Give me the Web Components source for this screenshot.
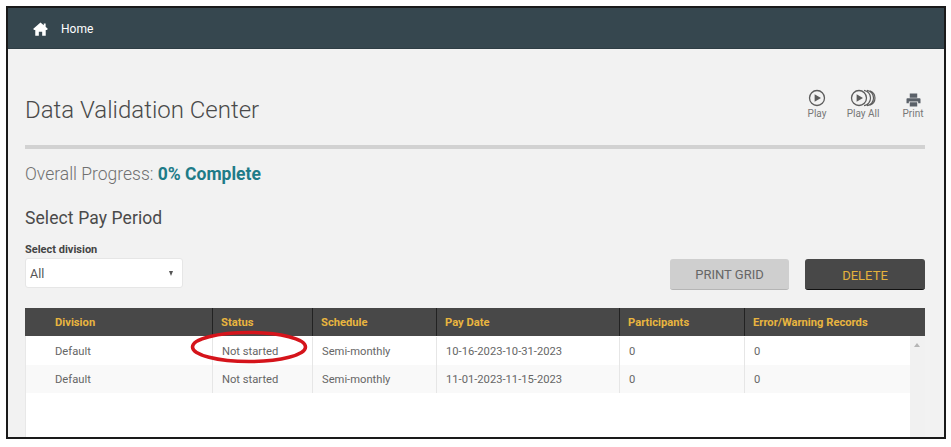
<!DOCTYPE html>
<html>
<head>
<meta charset="utf-8">
<title>Data Validation Center</title>
<style>
  html, body { margin: 0; padding: 0; background: #fff; font-family: Roboto, "Liberation Sans", sans-serif; }
  body { width: 951px; height: 447px; overflow: hidden; }
</style>
</head>
<body>
<app-frame>
  <top-bar>Home</top-bar>
  <page-head title-text="Data Validation Center">
    <tool-button label="Play" icon="play"></tool-button>
    <tool-button label="Play All" icon="playall"></tool-button>
    <tool-button label="Print" icon="print"></tool-button>
  </page-head>
  <progress-line percent="0% Complete"></progress-line>
  <pay-controls></pay-controls>
  <pay-grid></pay-grid>
</app-frame>

<script>
class AppFrame extends HTMLElement {
  constructor() {
    super();
    this.attachShadow({ mode: "open" });
    this.shadowRoot.innerHTML = `
      <style>
        :host { display: block; box-sizing: border-box; width: 940px; height: 433px; margin: 6px 0 0 6px;
          border: 2px solid #1a1a1a; background: #f2f2f2; overflow: hidden; }
      </style>
      <slot></slot>
    `;
  }
}

class TopBar extends HTMLElement {
  constructor() {
    super();
    this.attachShadow({ mode: "open" });
    this.shadowRoot.innerHTML = `
      <style>
        :host { display: flex; align-items: center; height: 41px; padding: 1px 0 0 25px; box-sizing: border-box;
          background: #36474f; color: #fff; font-size: 12px; border-bottom: 1px solid #2e3d44; }
        svg { width: 15px; height: 14px; margin-right: 13px; display: block; }
      </style>
      <svg viewBox="0 0 16 15"><path fill="#fff" d="M8 0.5 L11.5 3.5 V1.5 H13.5 V5.2 L16 7.5 L14.6 8.6 H13.6 V14.6 H9.8 V10.5 H6.2 V14.6 H2.4 V8.6 H1.4 L0 7.5 Z"/></svg>
      <slot></slot>
    `;
  }
}

class PageHead extends HTMLElement {
  constructor() {
    super();
    this.attachShadow({ mode: "open" });
    this.shadowRoot.innerHTML = `
      <style>
        :host { display: flex; justify-content: space-between; align-items: flex-start; box-sizing: border-box;
          height: 100px; margin: 0 19px 0 17px; border-bottom: 4px solid #d2d2d2; }
        h1 { margin: 45px 0 0; font-size: 24px; line-height: 32px; font-weight: 300; color: #4a4a4a; }
        .tools { display: flex; margin-top: 40px; }
      </style>
      <h1></h1>
      <div class="tools"><slot></slot></div>
    `;
    this.shadowRoot.querySelector("h1").textContent = this.getAttribute("title-text");
  }
}

const TOOL_ICONS = {
  play: `<svg width="18" height="18" viewBox="0 0 18 18"><circle cx="9" cy="9" r="7.5" fill="none" stroke="#5c5c5c" stroke-width="1.3"/><path fill="#5c5c5c" d="M6.6 5.2 L13 9 L6.6 12.8 Z"/></svg>`,
  playall: `<svg width="26" height="18" viewBox="0 0 26 18"><circle cx="9" cy="9" r="7.5" fill="none" stroke="#5c5c5c" stroke-width="1.3"/><path fill="#5c5c5c" d="M6.6 5.2 L13 9 L6.6 12.8 Z"/><path fill="none" stroke="#5c5c5c" stroke-width="1.2" d="M14 1.3 A7.8 7.8 0 0 1 14 16.7 M17 1.3 A7.8 7.8 0 0 1 17 16.7 M19.8 1.8 A7.6 7.6 0 0 1 19.8 16.2"/></svg>`,
  print: `<svg width="15" height="14" viewBox="0 0 16 15"><path fill="#5a6068" d="M4 0.5 H12 V5 H4 Z M1.5 5.5 H14.5 Q15.5 5.5 15.5 6.5 V11 H13 V9 H3 V11 H0.5 V6.5 Q0.5 5.5 1.5 5.5 Z M4 10 H12 V14.5 H4 Z"/></svg>`
};

class ToolButton extends HTMLElement {
  constructor() {
    super();
    this.attachShadow({ mode: "open" });
    this.shadowRoot.innerHTML = `
      <style>
        :host { display: flex; flex-direction: column; align-items: center; font-size: 10px; line-height: 12px; color: #777; }
        :host([icon="play"]) { margin-right: 17px; width: 24px; }
        :host([icon="playall"]) { margin-right: 21px; width: 34px; }
        :host([icon="print"]) { width: 24px; margin-top: 3px; }
        .ic { height: 18px; display: flex; align-items: center; justify-content: center; margin-bottom: 1px; }
        :host([icon="print"]) .ic { height: 15px; }
        svg { display: block; }
        span { white-space: nowrap; }
      </style>
      <div class="ic">${TOOL_ICONS[this.getAttribute("icon")]}</div>
      <span>${this.getAttribute("label")}</span>
    `;
  }
}

class ProgressLine extends HTMLElement {
  constructor() {
    super();
    this.attachShadow({ mode: "open" });
    this.shadowRoot.innerHTML = `
      <style>
        :host { display: block; margin: 13px 0 0 17px; font-size: 17.5px; line-height: 24px; font-weight: 300; color: #707070; }
        b { font-weight: 700; color: #1e7b88; }
      </style>
      Overall Progress: <b>${this.getAttribute("percent")}</b>
    `;
  }
}

class PayControls extends HTMLElement {
  constructor() {
    super();
    this.attachShadow({ mode: "open" });
    this.shadowRoot.innerHTML = `
      <style>
        :host { display: block; margin: 20px 19px 0 17px; color: #4a4a4a; }
        h2 { margin: 0; font-size: 17.5px; line-height: 24px; font-weight: 400; letter-spacing: 0.1px; }
        label { display: block; margin-top: 13px; font-size: 11px; line-height: 14px; font-weight: 700; color: #444; }
        .row { display: flex; justify-content: space-between; align-items: flex-start; margin-top: 1px; }
        .select { box-sizing: border-box; width: 158px; height: 30px; display: flex; align-items: center; justify-content: space-between;
          padding: 0 9px 0 4px; background: #fff; border: 1px solid #e6e6e6; border-radius: 3px; font-size: 12.5px; color: #555; }
        .arrow { width: 0; height: 0; border-left: 2.5px solid transparent; border-right: 2.5px solid transparent; border-top: 5px solid #555; }
        .btns { display: flex; gap: 16px; margin-top: 1px; }
        button { box-sizing: border-box; width: 120px; height: 31px; padding: 0; border: none; border-radius: 3px; font: inherit; font-size: 13px; }
        .grey { width: 119px; background: #cfcfcf; color: #666; border-bottom: 1px solid #b5b5b5; }
        .dark { background: #484848; color: #e4b23c; border-bottom: 1px solid #111; padding-top: 3px; }
      </style>
      <h2>Select Pay Period</h2>
      <label>Select division</label>
      <div class="row">
        <div class="select"><span>All</span><span class="arrow"></span></div>
        <div class="btns"><button class="grey">PRINT GRID</button><button class="dark">DELETE</button></div>
      </div>
    `;
  }
}

class PayGrid extends HTMLElement {
  constructor() {
    super();
    this.attachShadow({ mode: "open" });
    const cols = ["Division", "Status", "Schedule", "Pay Date", "Participants", "Error/Warning Records"];
    const rows = [
      ["Default", "Not started", "Semi-monthly", "10-16-2023-10-31-2023", "0", "0"],
      ["Default", "Not started", "Semi-monthly", "11-01-2023-11-15-2023", "0", "0"]
    ];
    const cells = (list) => list.map((t) => `<div class="c">${t}</div>`).join("");
    this.shadowRoot.innerHTML = `
      <style>
        :host { display: block; position: relative; margin: 18px 19px 0 17px; height: 130px; background: #fff; border-left: 1px solid #e8e8e8; box-sizing: border-box; width: 900px; }
        .line { display: grid; box-sizing: border-box; }
        .head { height: 28px; background: #484848; color: #e8b53f; font-size: 11.2px; font-weight: 700; margin-left: -1px; grid-template-columns: 187px 100px 124px 183px 125px 1fr; }
        .head .c { display: flex; align-items: center; padding-left: 8px; border-left: 1px solid #222; }
        .head .c:first-child { border-left: none; padding-left: 30px; }
        .body { display: flex; }
        .rows { width: 884px; }
        .row { height: 28px; color: #666; font-size: 11.2px; grid-template-columns: 186px 100px 124px 183px 125px 1fr; }
        .row:first-child { height: 29px; padding-top: 1px; }
        .row:nth-child(2) { background: #f9f9f9; }
        .row .c { display: flex; align-items: center; padding-left: 9px; border-left: 1px solid #e6e6e6; }
        .row .c:first-child { border-left: none; padding-left: 29px; }
        .scroll { width: 15px; height: 102px; background: #f1f1f1; position: relative; }
        .scroll::before { content: ""; position: absolute; left: 4px; top: 7px; border-left: 3.5px solid transparent; border-right: 3.5px solid transparent; border-bottom: 4px solid #b5b5b5; }
        .ring { position: absolute; left: 164px; top: 21px; }
      </style>
      <div class="line head">${cells(cols)}</div>
      <div class="body">
        <div class="rows">
          ${rows.map((r) => `<div class="line row">${cells(r)}</div>`).join("")}
        </div>
        <div class="scroll"></div>
      </div>
      <svg class="ring" width="120" height="36" viewBox="0 0 120 36"><ellipse cx="59" cy="18" rx="56.5" ry="14.5" fill="none" stroke="#d5141b" stroke-width="3.5"/></svg>
    `;
  }
}

customElements.define("app-frame", AppFrame);
customElements.define("top-bar", TopBar);
customElements.define("page-head", PageHead);
customElements.define("tool-button", ToolButton);
customElements.define("progress-line", ProgressLine);
customElements.define("pay-controls", PayControls);
customElements.define("pay-grid", PayGrid);
</script>
</body>
</html>
